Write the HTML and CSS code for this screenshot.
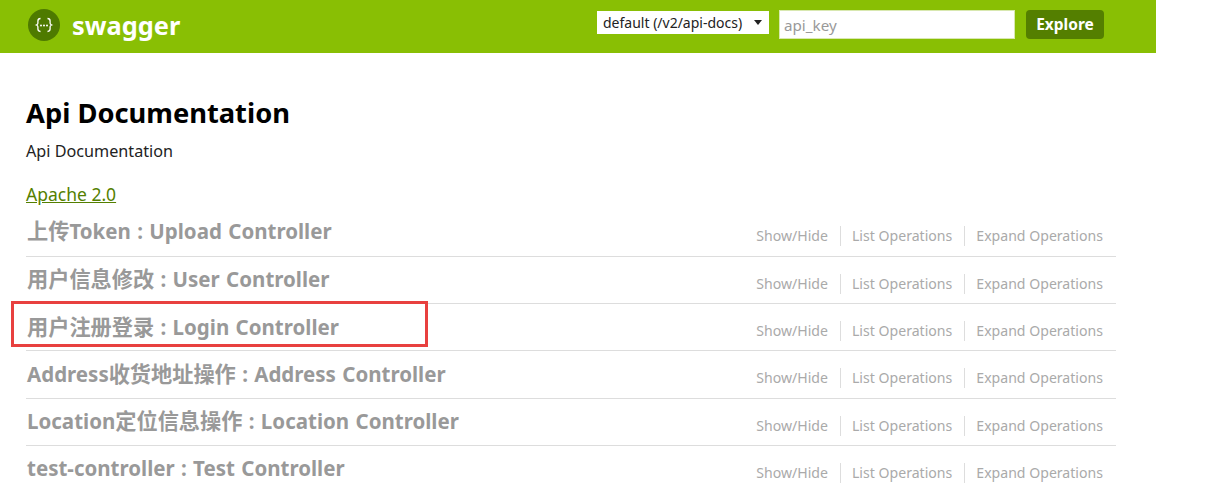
FILE: index.html
```html
<!DOCTYPE html>
<html lang="en">
<head>
    <meta charset="UTF-8">
    <title>Swagger UI</title>
    <link rel="stylesheet" href="styles.css">
</head>
<body>
    <header class="header">
        <a class="logo">
            <svg class="logo-icon" width="32" height="32" viewBox="0 0 32 32">
                <circle cx="16" cy="16" r="16" fill="#4e7a00"/>
                <path d="M12.5 9.5c-2 0-2.6.8-2.6 2.4v2.400c0 1-.5 1.300-1.500 1.700 1 .4 1.500.7 1.500 1.700v2.400c0 1.600.6 2.400 2.600 2.400M19.500 9.500c2 0 2.600.8 2.600 2.400v2.400c0 1 .5 1.300 1.500 1.700-1 .4-1.500.7-1.500 1.700v2.400c0 1.600-.6 2.400-2.600 2.400" fill="none" stroke="#fff" stroke-width="1.300"/>
                <circle cx="13" cy="16.500" r="1" fill="#fff"/>
                <circle cx="16" cy="16.500" r="1" fill="#fff"/>
                <circle cx="19" cy="16.500" r="1" fill="#fff"/>
            </svg>
            <span class="logo-text">swagger</span>
        </a>
        <form class="api-form">
            <div class="select-wrap">
                <select class="spec-select">
                    <option>default (/v2/api-docs)</option>
                </select>
            </div>
            <input class="api-key" type="text" placeholder="api_key">
            <a class="explore">Explore</a>
        </form>
    </header>

    <main class="content">
        <h1 class="title">Api Documentation</h1>
        <p class="description">Api Documentation</p>
        <a class="license" href="#">Apache 2.0</a>

        <ul class="resources">
            <li class="resource">
                <h2 class="resource-name"><span class="cjk">上传</span>Token : Upload Controller</h2>
                <div class="resource-links"><a>Show/Hide</a><a>List Operations</a><a>Expand Operations</a></div>
            </li>
            <li class="resource">
                <h2 class="resource-name"><span class="cjk">用户信息修改</span> : User Controller</h2>
                <div class="resource-links"><a>Show/Hide</a><a>List Operations</a><a>Expand Operations</a></div>
            </li>
            <li class="resource">
                <h2 class="resource-name"><span class="cjk">用户注册登录</span> : Login Controller</h2>
                <div class="resource-links"><a>Show/Hide</a><a>List Operations</a><a>Expand Operations</a></div>
                <div class="highlight"></div>
            </li>
            <li class="resource">
                <h2 class="resource-name">Address<span class="cjk">收货地址操作</span> : Address Controller</h2>
                <div class="resource-links"><a>Show/Hide</a><a>List Operations</a><a>Expand Operations</a></div>
            </li>
            <li class="resource">
                <h2 class="resource-name">Location<span class="cjk">定位信息操作</span> : Location Controller</h2>
                <div class="resource-links"><a>Show/Hide</a><a>List Operations</a><a>Expand Operations</a></div>
            </li>
            <li class="resource">
                <h2 class="resource-name">test-controller : Test Controller</h2>
                <div class="resource-links"><a>Show/Hide</a><a>List Operations</a><a>Expand Operations</a></div>
            </li>
        </ul>
    </main>
</body>
</html>
```

FILE: styles.css
```css
* {
    box-sizing: border-box;
}
html, body {
    margin: 0;
    height: 495px;
    overflow: hidden;
}
body {
    background: #fff;
    font-family: "Noto Sans", "Noto Sans CJK SC", sans-serif;
}
.header {
    width: 1156px;
    height: 53px;
    background: #89bf04;
    display: flex;
    align-items: center;
    justify-content: space-between;
    padding: 0 52px 0 28px;
}
.logo {
    display: flex;
    align-items: center;
    gap: 12px;
    margin-bottom: 3px;
}
.logo-icon {
    display: block;
}
.logo-text {
    color: #fff;
    font-size: 25.400px;
    font-weight: 700;
    line-height: 32px;
}
.api-form {
    display: flex;
    align-items: center;
    margin-bottom: 4px;
}
.select-wrap {
    position: relative;
    margin: 0 10px 5px 0;
}
/* the small filled arrow of the select */
.select-wrap::after {
    content: "";
    position: absolute;
    right: 7px;
    top: 9px;
    border-left: 4px solid transparent;
    border-right: 4px solid transparent;
    border-top: 5px solid #222;
}
.spec-select {
    display: block;
    width: 172px;
    height: 23px;
    padding: 0 0 0 6px;
    border: 0;
    border-radius: 0;
    appearance: none;
    background: #fff;
    color: #222;
    font-family: inherit;
    font-size: 14px;
}
.api-key {
    width: 236px;
    height: 29px;
    margin-right: 11px;
    padding: 1px 4px 0;
    border: 1px solid #d8e8b0;
    background: #fff;
    font-family: inherit;
    font-size: 15.200px;
}
.api-key::placeholder {
    color: #999;
}
.explore {
    width: 78px;
    height: 29px;
    border-radius: 4px;
    background: #547f00;
    color: #fff;
    font-size: 15.500px;
    font-weight: 700;
    line-height: 29px;
    text-align: center;
}
.content {
    width: 1116px;
    padding: 41px 0 0 26px;
}
.title {
    margin: 0;
    color: #000;
    font-size: 27.300px;
    font-weight: 700;
    line-height: 37px;
}
.description {
    margin: 10px 0 0;
    color: #222;
    font-size: 16.200px;
    line-height: 21px;
}
.license {
    display: block;
    margin-top: 21px;
    color: #547f00;
    font-size: 17.500px;
    line-height: 22px;
    width: max-content;
}
.resources {
    list-style: none;
    margin: 0;
    padding: 0;
}
.resource {
    position: relative;
    display: flex;
    align-items: center;
    justify-content: space-between;
    height: 47.400px;
    padding: 0 13px 1px 1px;
    border-bottom: 1px solid #ddd;
}
.resource:first-child {
    height: 51.500px;
    padding-top: 3px;
}
.resource:last-child {
    padding-bottom: 3px;
    border-bottom: 0;
}
.resource-name {
    margin: 0;
    color: #999;
    font-size: 20.500px;
    font-weight: 700;
    line-height: 28px;
    word-spacing: 1px;
}
.cjk {
    font-size: 21.200px;
}
.resource-links {
    display: flex;
    padding-top: 9px;
    color: #aaa;
    font-size: 14.100px;
    line-height: 20px;
}
.resource-links a {
    padding: 0 12px 0 11px;
    border-right: 1px solid #ddd;
}
.resource-links a:last-child {
    padding-right: 0;
    border-right: 0;
}
/* red box drawn on top of the login row */
.highlight {
    position: absolute;
    left: -15px;
    top: -3px;
    width: 417px;
    height: 46px;
    border: 3px solid #e8403f;
}
```
